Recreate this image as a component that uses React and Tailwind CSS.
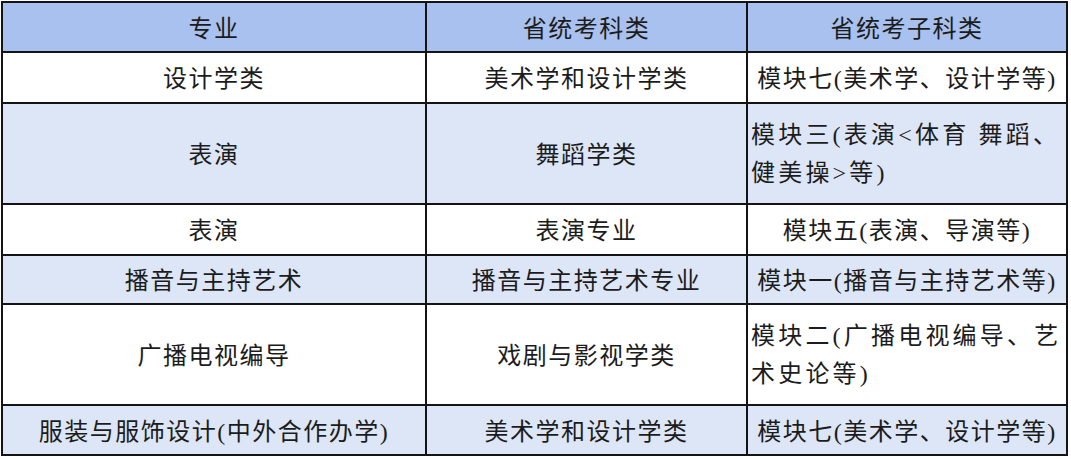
import React from "react";

const rows = [
  { h: "h-[49px]", bg: "bg-white", a: "设计学类", b: "美术学和设计学类", c: ["模块七(美术学、设计学等)"] },
  { h: "h-[99px]", bg: "bg-[#dce6f7]", a: "表演", b: "舞蹈学类", c: ["模块三(表演<体育 舞蹈、", "健美操>等)"], left: true },
  { h: "h-[49px]", bg: "bg-white", a: "表演", b: "表演专业", c: ["模块五(表演、导演等)"] },
  { h: "h-[47px]", bg: "bg-[#dce6f7]", a: "播音与主持艺术", b: "播音与主持艺术专业", c: ["模块一(播音与主持艺术等)"] },
  { h: "h-[99px]", bg: "bg-white", a: "广播电视编导", b: "戏剧与影视学类", c: ["模块二(广播电视编导、艺", "术史论等)"], left: true },
  { h: "h-[48px]", bg: "bg-[#dce6f7]", a: "服装与服饰设计(中外合作办学)", b: "美术学和设计学类", c: ["模块七(美术学、设计学等)"] },
];

function Cell({ className = "", children }) {
  return (
    <div className={`flex items-center justify-center text-center whitespace-nowrap pt-[3px] ${className}`}>
      {children}
    </div>
  );
}

export default function App() {
  return (
    <div className="w-[1071px] h-[459px] bg-white overflow-hidden pl-[1px] pt-[1px]">
      <div
        className="grid grid-cols-[422px_319px_318px] gap-[2px] p-[2px] bg-[#141414] w-[1067px] text-[24px] leading-[38px] tracking-[1.5px] text-[#1c1c1c]"
        style={{ fontFamily: '"Liberation Serif", "Noto Sans CJK SC", serif' }}
      >
        <Cell className="h-[48px] bg-[#a9c1ee]">专业</Cell>
        <Cell className="h-[48px] bg-[#a9c1ee]">省统考科类</Cell>
        <Cell className="h-[48px] bg-[#a9c1ee]">省统考子科类</Cell>
        {rows.map((r, i) => (
          <React.Fragment key={i}>
            <Cell className={`${r.h} ${r.bg}`}>{r.a}</Cell>
            <Cell className={`${r.h} ${r.bg}`}>{r.b}</Cell>
            {r.left ? (
              <div className={`${r.h} ${r.bg} flex flex-col justify-center pl-[3px] tracking-[3.2px] whitespace-nowrap`}>
                {r.c.map((line, j) => (
                  <span key={j} className="block">{line}</span>
                ))}
              </div>
            ) : (
              <Cell className={`${r.h} ${r.bg}`}>{r.c[0]}</Cell>
            )}
          </React.Fragment>
        ))}
      </div>
    </div>
  );
}
